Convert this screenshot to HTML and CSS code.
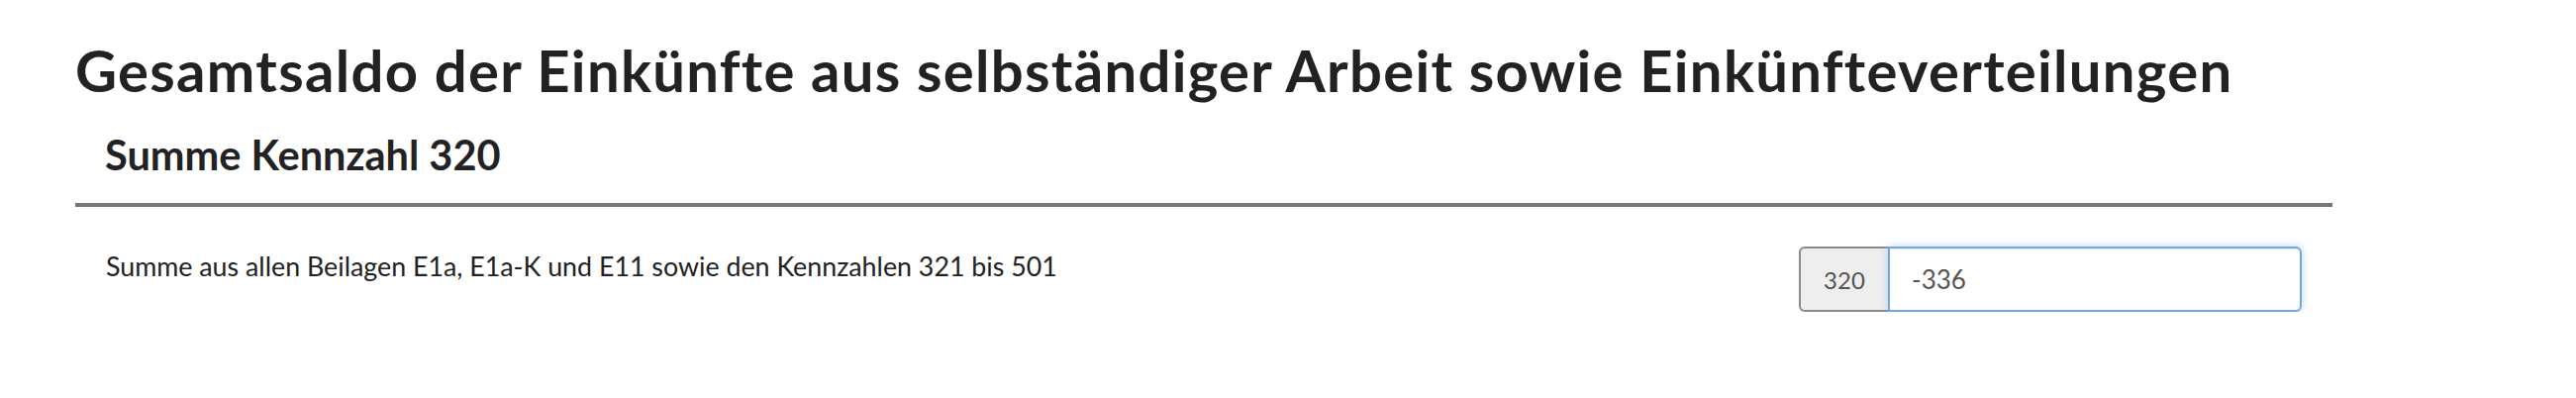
FILE: index.html
```html
<!DOCTYPE html>
<html lang="de">
<head>
<meta charset="utf-8">
<title>Gesamtsaldo</title>
<link rel="stylesheet" href="styles.css">
</head>
<body>
<section class="panel">
  <h1 class="title">Gesamtsaldo der Einkünfte aus selbständiger Arbeit sowie Einkünfteverteilungen</h1>
  <h2 class="subtitle">Summe Kennzahl 320</h2>
  <div class="row">
    <label class="label" for="kz320">Summe aus allen Beilagen E1a, E1a-K und E11 sowie den Kennzahlen 321 bis 501</label>
    <div class="input-group">
      <span class="addon">320</span>
      <input class="field" id="kz320" type="text" value="-336">
    </div>
  </div>
</section>
</body>
</html>
```
FILE: styles.css
```css
* { box-sizing: border-box; }
html, body { margin: 0; padding: 0; background: #fff; }
body {
  font-family: Lato, "Noto Sans", sans-serif;
  color: #222;
}
.panel {
  width: 2280px;
  margin-left: 76px;
  padding-top: 36px;
}
.title {
  margin: 0;
  font-size: 58px;
  line-height: 1.2;
  font-weight: 700;
  letter-spacing: 1.3px;
  color: #222;
}
.subtitle {
  margin: 26px 0 0;
  padding: 0 30px 24px;
  font-size: 41.5px;
  line-height: 1.2;
  font-weight: 700;
  color: #222;
  border-bottom: 4px solid #777;
}
.row {
  display: flex;
  justify-content: space-between;
  align-items: flex-start;
  padding: 40px 31px 0 31px;
}
.label {
  font-size: 26.8px;
  line-height: 1.5;
  color: #222;
}
.input-group {
  display: flex;
  width: 508px;
  height: 66px;
}
.addon {
  width: 90px;
  display: flex;
  align-items: center;
  justify-content: center;
  background: #eee;
  border: 2px solid #8a8a8a;
  border-right: 0;
  border-radius: 6px 0 0 6px;
  font-size: 24px;
  color: #555;
}
.field {
  flex: 1;
  min-width: 0;
  height: 100%;
  border: 2px solid #6fa6e6;
  border-radius: 0 6px 6px 0;
  padding: 0 22px;
  font-family: Lato, "Noto Sans", sans-serif;
  font-size: 26px;
  color: #555;
  outline: none;
  box-shadow: inset 0 1px 1px rgba(0,0,0,.075), 0 0 10px rgba(102,175,233,.45);
}
```
